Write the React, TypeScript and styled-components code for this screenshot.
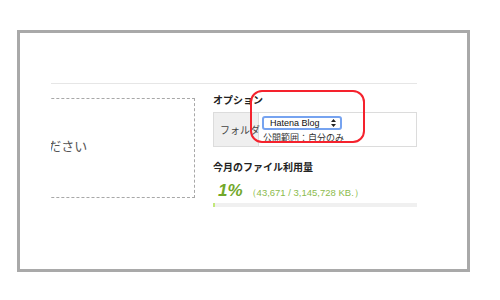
import React from 'react'
import styled, { createGlobalStyle } from 'styled-components'

const GlobalStyle = createGlobalStyle`
  html, body {
    margin: 0;
    padding: 0;
    background: #fff;
    font-family: "Noto Sans CJK JP", "Noto Sans", sans-serif;
  }
`

const Frame = styled.div`
  box-sizing: border-box;
  margin: 30px 0 0 17px;
  width: 453px;
  height: 242px;
  border: 3px solid #a9a9a9;
  background: #fff;
  padding: 50px 0 0 31px;
`

const Content = styled.div`
  width: 366px;
  overflow: hidden;
  border-top: 1px solid #e6e6e6;
  display: flex;
  gap: 18px;
`

const LeftCol = styled.div`
  width: 144px;
  flex: none;
  padding-top: 14px;
`

// the drop zone runs off to the left, only its right end is visible
const DropZone = styled.div`
  box-sizing: border-box;
  width: 400px;
  height: 100px;
  margin-left: -256px;
  border: 1px dashed #a8a8a8;
  display: flex;
  align-items: center;
  padding: 0 0 6px 58px;
  font-size: 13px;
  color: #555;
  white-space: nowrap;
`

const RightCol = styled.div`
  flex: 1;
  position: relative;
  padding-top: 9px;
`

const Heading = styled.div`
  font-size: 10px;
  font-weight: bold;
  line-height: 14px;
  color: #222;
`

const OptionTable = styled.div`
  display: flex;
  margin-top: 5px;
  height: 35px;
  box-sizing: border-box;
  border: 1px solid #dcdcdc;
`

const HeadCell = styled.div`
  width: 45px;
  background: #efefef;
  border-right: 1px solid #dcdcdc;
  display: flex;
  align-items: center;
  padding-left: 6px;
  box-sizing: border-box;
  font-size: 10px;
  color: #444;
  white-space: nowrap;
`

const DataCell = styled.div`
  padding: 3px 0 0 3px;
`

const Select = styled.div`
  box-sizing: border-box;
  width: 80px;
  height: 14px;
  border: 2px solid #76a3f0;
  border-radius: 3px;
  background: #fff;
  display: flex;
  align-items: center;
  justify-content: space-between;
  padding: 0 4px 0 6px;
  font-family: "Liberation Sans", Arial, sans-serif;
  font-size: 9px;
  color: #111;
`

const Arrows = styled.svg`
  width: 5px;
  height: 8px;
`

const Visibility = styled.div`
  font-size: 9px;
  line-height: 13px;
  margin-top: 1px;
  padding-left: 1px;
  color: #333;
  white-space: nowrap;
`

const UsageHeading = styled(Heading)`
  margin-top: 13px;
`

const UsageRow = styled.div`
  display: flex;
  align-items: baseline;
  gap: 4px;
  margin-top: 7px;
  padding-left: 5px;
  height: 20px;
`

const Percent = styled.span`
  font-family: "Liberation Sans", Arial, sans-serif;
  font-size: 17px;
  font-weight: bold;
  font-style: italic;
  color: #72a82a;
`

const UsageDetail = styled.span`
  font-family: "Liberation Sans", Arial, sans-serif;
  font-size: 9.5px;
  color: #8cbb4c;
`

const Bar = styled.div`
  margin-top: 2px;
  height: 4px;
  background: #f0f0f0;
`

const BarFill = styled.div`
  height: 100%;
  background: #c3e87a;
`

const Highlight = styled.div`
  position: absolute;
  left: 37px;
  top: 6px;
  width: 115px;
  height: 53px;
  box-sizing: border-box;
  border: 2px solid #f5222d;
  border-radius: 12px;
`

export default function App() {
  const used = 43671
  const total = 3145728
  const pct = Math.max(1, Math.round((used / total) * 100))
  return (
    <>
      <GlobalStyle />
      <Frame>
        <Content>
          <LeftCol>
            <DropZone>ここにファイルをドロップしてください</DropZone>
          </LeftCol>
          <RightCol>
            <Heading>オプション</Heading>
            <OptionTable>
              <HeadCell>フォルダ</HeadCell>
              <DataCell>
                <Select>
                  Hatena Blog
                  <Arrows viewBox="0 0 5 8">
                    <path d="M2.5 0 L5 3 L0 3 Z M2.5 8 L5 5 L0 5 Z" fill="#222" />
                  </Arrows>
                </Select>
                <Visibility>公開範囲：自分のみ</Visibility>
              </DataCell>
            </OptionTable>
            <UsageHeading>今月のファイル利用量</UsageHeading>
            <UsageRow>
              <Percent>{pct}%</Percent>
              <UsageDetail>（43,671 / 3,145,728 KB.）</UsageDetail>
            </UsageRow>
            <Bar>
              <BarFill style={{ width: `${pct}%` }} />
            </Bar>
            <Highlight />
          </RightCol>
        </Content>
      </Frame>
    </>
  )
}
